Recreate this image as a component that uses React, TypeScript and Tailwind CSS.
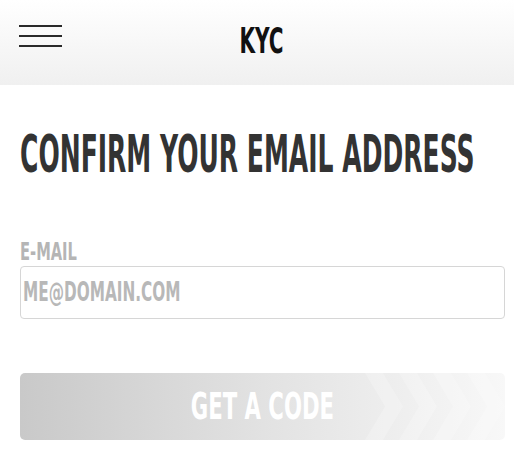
const condensed = { fontFamily: '"DejaVu Sans Condensed", "Liberation Sans", sans-serif' };

// Thin three-bar toggle in the top bar
const Burger = () => (
  <div className="flex flex-col gap-[8px] w-[43px]">
    <span className="block h-[2px] bg-[#2a2a2a]" />
    <span className="block h-[2px] bg-[#2a2a2a]" />
    <span className="block h-[2px] bg-[#2a2a2a]" />
  </div>
);

// Faint arrow bands on the right end of the button
const Chevrons = () => (
  <svg className="absolute right-0 top-0 h-full w-[140px]" viewBox="0 0 140 67" preserveAspectRatio="none">
    {[0, 34, 68, 102].map((x, i) => (
      <polygon
        key={i}
        points={`${x},0 ${x + 18},0 ${x + 38},33.5 ${x + 18},67 ${x},67 ${x + 20},33.5`}
        fill="#ffffff"
        fillOpacity={0.22}
      />
    ))}
  </svg>
);

export default function App() {
  return (
    <div className="w-[514px] h-[456px] bg-white overflow-hidden" style={condensed}>
      <header className="h-[85px] bg-gradient-to-b from-white to-[#f0f0f0] relative flex items-center justify-center pl-[10px]">
        <div className="absolute left-[19px] top-[25px]">
          <Burger />
        </div>
        <h1 className="text-[36px] leading-none font-bold text-[#111] scale-x-[0.62] mt-[-4px]">KYC</h1>
      </header>

      <main className="pl-[20px] pr-[9px]">
        <h2 className="mt-[40px] text-[51px] leading-[60px] font-bold text-[#333] origin-left scale-x-[0.546] whitespace-nowrap">
          CONFIRM YOUR EMAIL ADDRESS
        </h2>

        <label className="block mt-[55px] text-[24px] leading-[24px] font-bold text-[#b5b5b5] origin-left scale-x-[0.68]">
          E-MAIL
        </label>
        <div className="mt-[2px] h-[53px] border border-[#d6d6d6] rounded-[4px] flex items-center pl-[2px]">
          <span className="text-[27px] font-bold text-[#b8b8b8] origin-left scale-x-[0.63] whitespace-nowrap">
            ME@DOMAIN.COM
          </span>
        </div>

        <button className="relative mt-[54px] w-full h-[67px] rounded-[5px] overflow-hidden bg-gradient-to-r from-[#c9c9c9] via-[#e2e2e2] to-[#f8f8f8] flex items-center justify-center">
          <Chevrons />
          <span className="relative text-[38px] font-bold text-white scale-x-[0.62] whitespace-nowrap">GET A CODE</span>
        </button>
      </main>
    </div>
  );
}
